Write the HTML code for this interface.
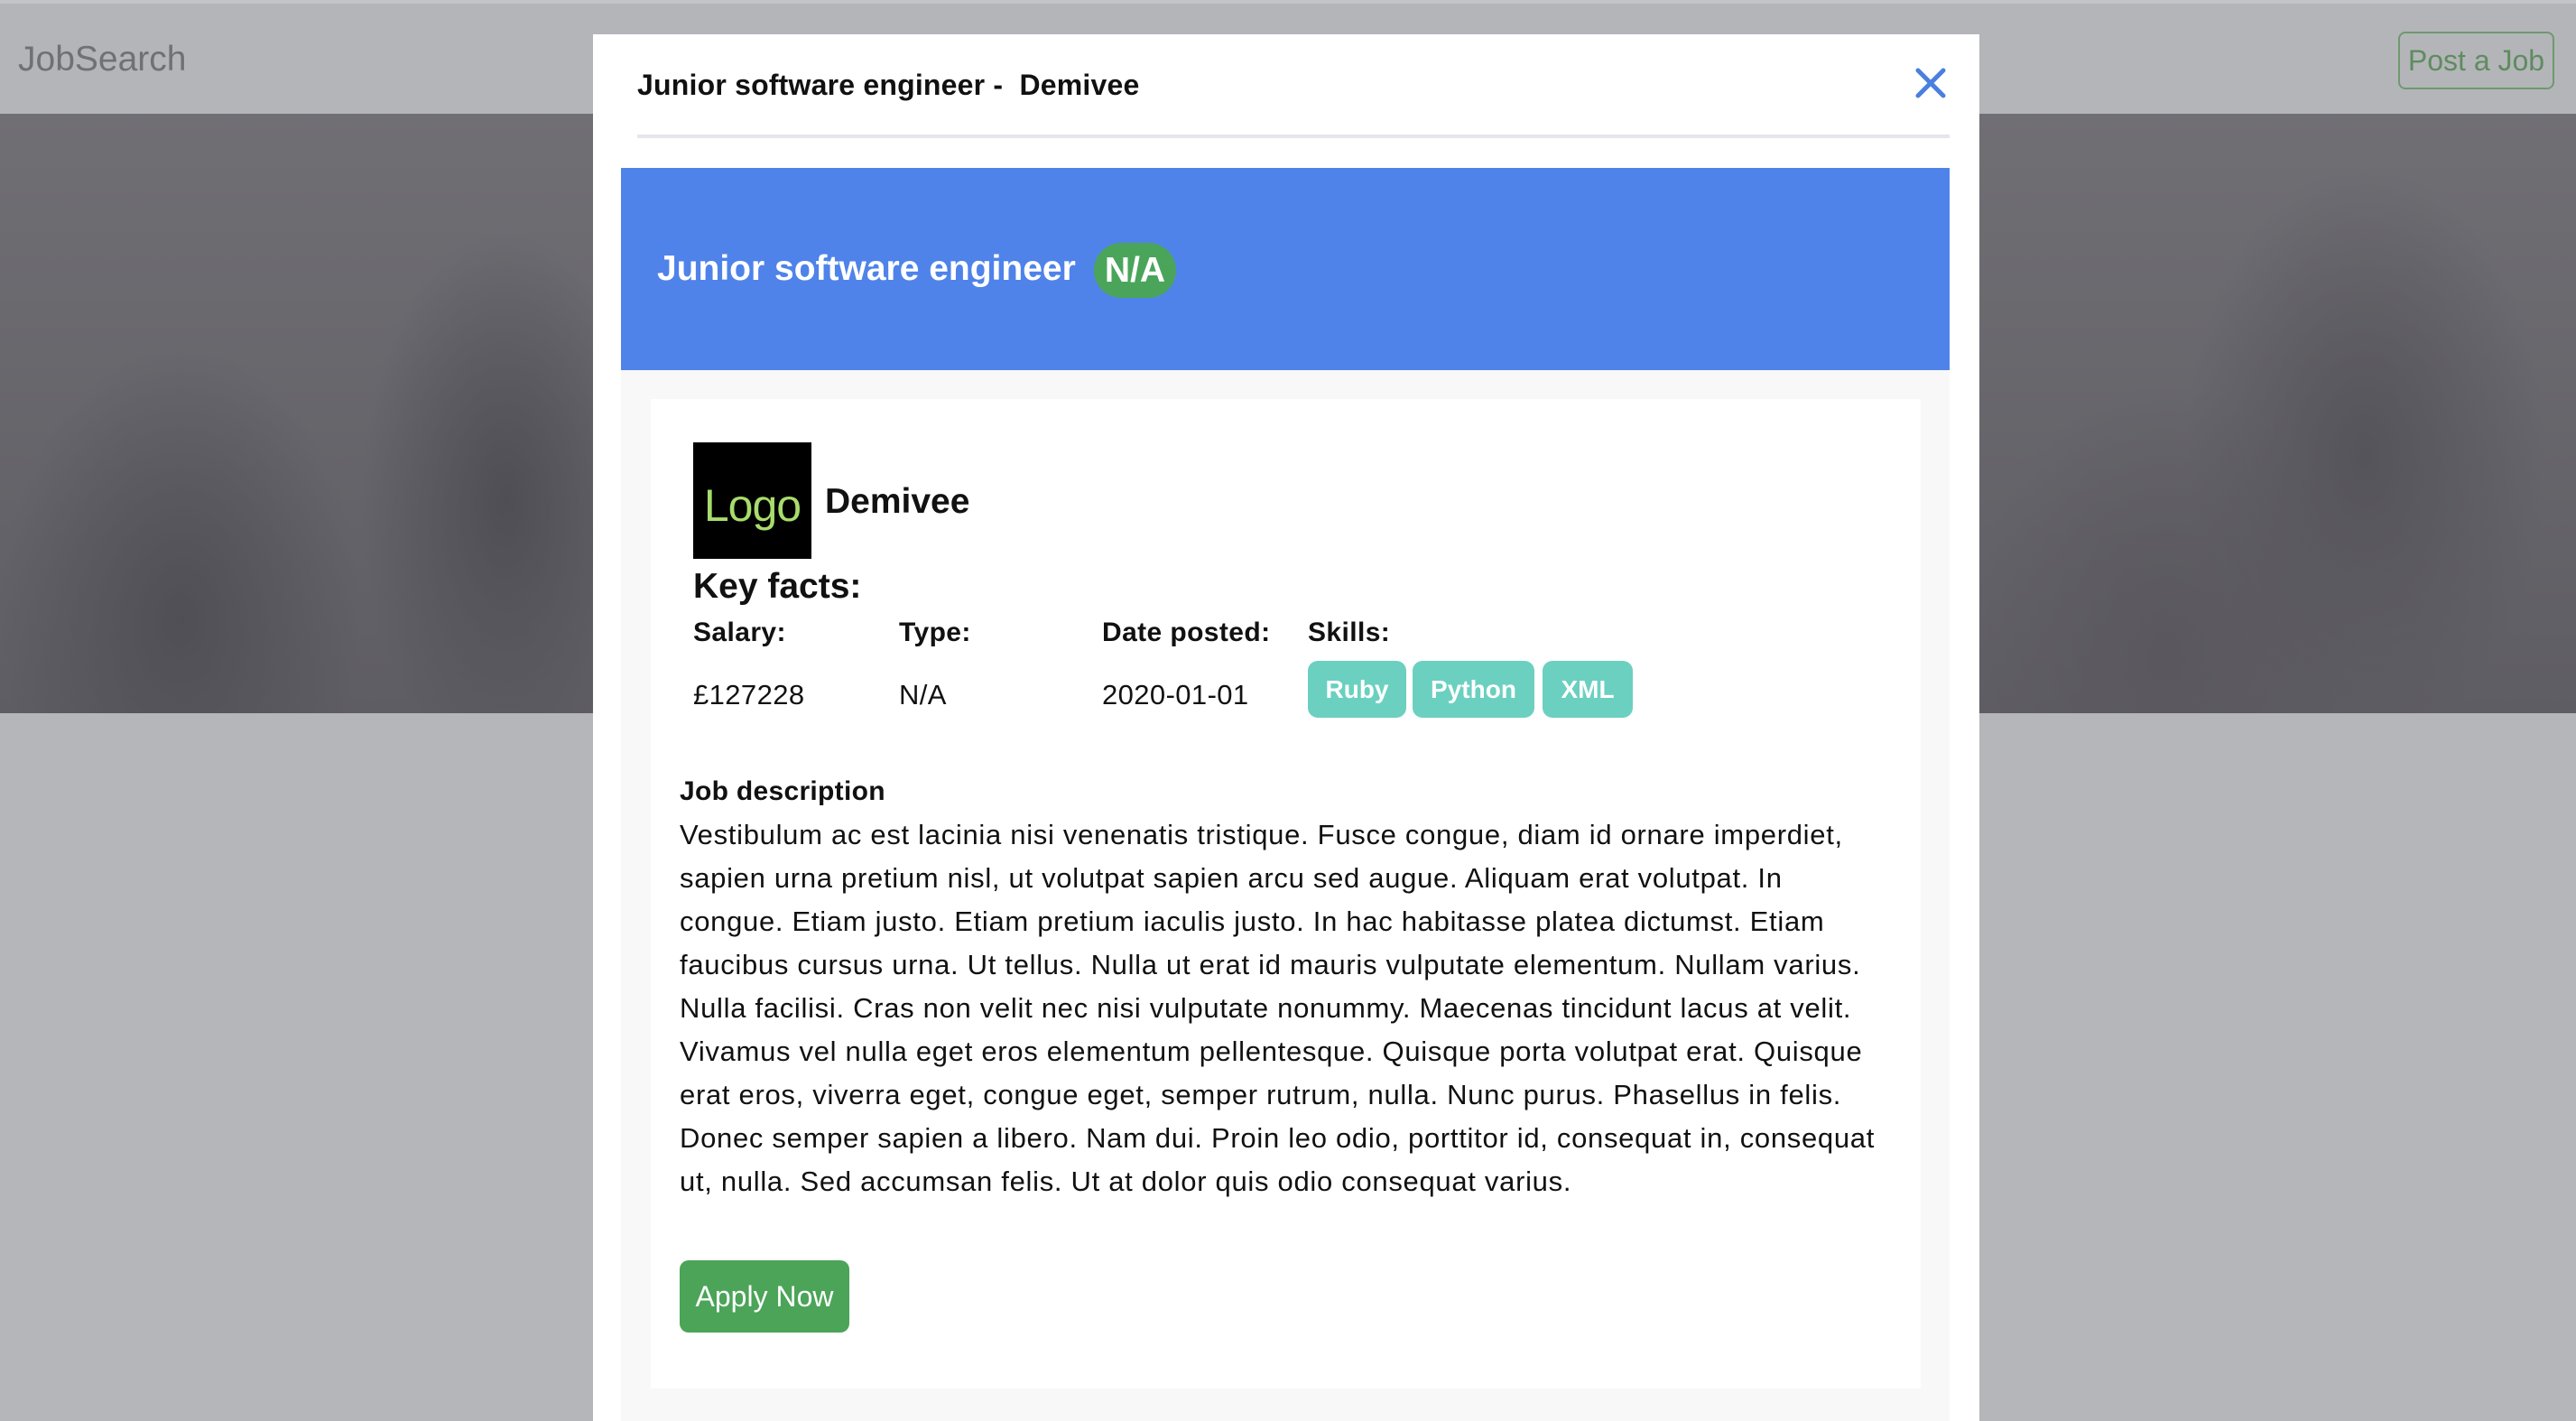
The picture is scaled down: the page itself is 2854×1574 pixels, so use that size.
<!DOCTYPE html>
<html><head><meta charset="utf-8"><style>
*{margin:0;padding:0;box-sizing:border-box}
body{width:2854px;height:1574px;overflow:hidden;background:#b5b6ba;font-family:"Liberation Sans",Helvetica,Arial,sans-serif;position:relative}
.nav{position:absolute;left:0;top:0;width:2854px;height:126px;background:#b4b5b9;border-top:4px solid #c4c5c8}
.brand{position:absolute;left:20px;top:40px;font-size:39px;color:#707175}
.post{position:absolute;left:2657px;top:31px;width:173px;height:64px;border:2px solid #6d9a6e;border-radius:8px;color:#5f8c60;font-size:32px;line-height:60px;text-align:center}
.hero{position:absolute;left:0;top:126px;width:2854px;height:664px;background:
radial-gradient(ellipse 160px 300px at 560px 430px,#4f4e55,transparent),
radial-gradient(ellipse 200px 300px at 200px 560px,#4f4f55,transparent),
radial-gradient(ellipse 200px 320px at 2620px 380px,#55545a,transparent),
radial-gradient(ellipse 220px 300px at 2400px 600px,#5a585e,transparent),
linear-gradient(#706f74,#5e5d63)}
.modal{position:absolute;left:657px;top:38px;width:1536px;height:1536px;background:#fff}
.mtitle{position:absolute;left:49px;top:38px;font-size:32px;font-weight:bold;color:#111;white-space:pre;letter-spacing:0.2px}
.close{position:absolute;left:1462px;top:34px;width:40px;height:40px}
.div{position:absolute;left:49px;top:111px;width:1454px;height:4px;background:#e5e7eb}
.banner{position:absolute;left:31px;top:148px;width:1472px;height:224px;background:#4f83ea}
.btitle{position:absolute;left:40px;top:90px;font-size:39px;font-weight:bold;color:#fff}
.badge{position:absolute;left:524px;top:83px;width:91px;height:61px;border-radius:31px;background:#4aa55a;color:#fff;font-weight:bold;font-size:39px;line-height:61px;text-align:center}
.gray{position:absolute;left:31px;top:372px;width:1472px;height:1164px;background:#f8f8f9}
.card{position:absolute;left:64px;top:404px;width:1407px;height:1096px;background:#fff}
.logo{position:absolute;left:47px;top:48px;width:131px;height:129px;background:#000;color:#a8dc6c;font-size:50px;font-weight:300;text-align:center;line-height:140px;letter-spacing:-1px}
.cname{position:absolute;left:193px;top:92px;font-size:39px;font-weight:bold;color:#111}
.kf{position:absolute;left:47px;top:186px;font-size:39px;font-weight:bold;color:#111}
.lab{position:absolute;top:242px;font-size:30px;font-weight:bold;color:#111;letter-spacing:0.4px}
.val{position:absolute;top:310px;font-size:31px;color:#111;letter-spacing:0.4px}
.sk{position:absolute;top:290px;height:63px;border-radius:11px;background:#6bd0c0;color:#fff;font-weight:bold;font-size:28px;line-height:63px;text-align:center}
.jd{position:absolute;left:32px;top:418px;font-size:30px;font-weight:bold;color:#111;letter-spacing:0.3px}
.para{position:absolute;left:32px;top:459px;font-size:31px;line-height:48px;color:#111;white-space:nowrap;letter-spacing:0.7px}
.apply{position:absolute;left:32px;top:954px;width:188px;height:80px;border-radius:10px;background:#4ba457;color:#fff;font-size:32px;line-height:80px;text-align:center}
</style></head><body>
<div class="nav"><div class="brand">JobSearch</div><div class="post">Post a Job</div></div>
<div class="hero"></div>
<div class="modal">
<div class="mtitle">Junior software engineer -  Demivee</div>
<svg class="close" viewBox="0 0 40 40"><path d="M6 6L34 34M34 6L6 34" stroke="#4a7fe0" stroke-width="5" stroke-linecap="round"/></svg>
<div class="div"></div>
<div class="banner"><div class="btitle">Junior software engineer</div><div class="badge">N/A</div></div>
<div class="gray"></div>
<div class="card">
<div class="logo">Logo</div>
<div class="cname">Demivee</div>
<div class="kf">Key facts:</div>
<div class="lab" style="left:47px">Salary:</div>
<div class="lab" style="left:275px">Type:</div>
<div class="lab" style="left:500px">Date posted:</div>
<div class="lab" style="left:728px">Skills:</div>
<div class="val" style="left:47px">£127228</div>
<div class="val" style="left:275px">N/A</div>
<div class="val" style="left:500px">2020-01-01</div>
<div class="sk" style="left:728px;width:109px">Ruby</div>
<div class="sk" style="left:844px;width:135px">Python</div>
<div class="sk" style="left:988px;width:100px">XML</div>
<div class="jd">Job description</div>
<div class="para">Vestibulum ac est lacinia nisi venenatis tristique. Fusce congue, diam id ornare imperdiet,<br>sapien urna pretium nisl, ut volutpat sapien arcu sed augue. Aliquam erat volutpat. In<br>congue. Etiam justo. Etiam pretium iaculis justo. In hac habitasse platea dictumst. Etiam<br>faucibus cursus urna. Ut tellus. Nulla ut erat id mauris vulputate elementum. Nullam varius.<br>Nulla facilisi. Cras non velit nec nisi vulputate nonummy. Maecenas tincidunt lacus at velit.<br>Vivamus vel nulla eget eros elementum pellentesque. Quisque porta volutpat erat. Quisque<br>erat eros, viverra eget, congue eget, semper rutrum, nulla. Nunc purus. Phasellus in felis.<br>Donec semper sapien a libero. Nam dui. Proin leo odio, porttitor id, consequat in, consequat<br>ut, nulla. Sed accumsan felis. Ut at dolor quis odio consequat varius.</div>
<div class="apply">Apply Now</div>
</div>
</div>
</body></html>
